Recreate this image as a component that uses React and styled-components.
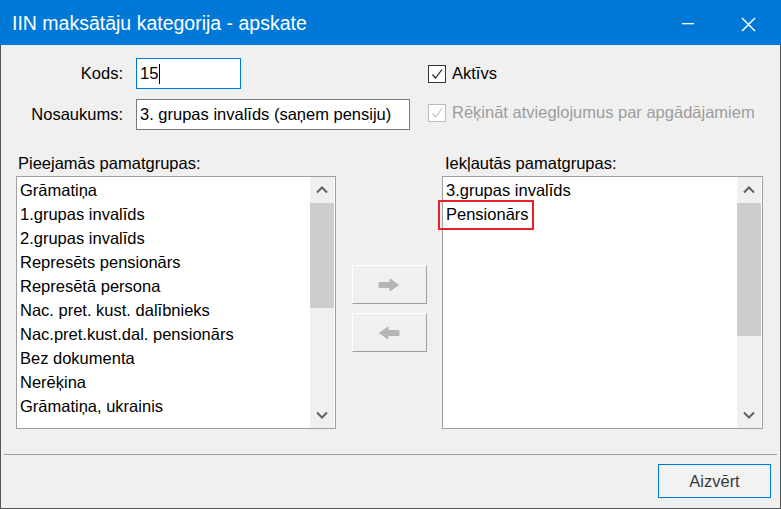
import React from 'react';
import styled, { createGlobalStyle } from 'styled-components';

const GlobalStyle = createGlobalStyle`
  html, body {
    margin: 0;
    padding: 0;
    background: #ffffff;
  }
  * {
    box-sizing: border-box;
  }
`;

const Window = styled.div`
  width: 781px;
  height: 509px;
  display: flex;
  flex-direction: column;
  font-family: "Liberation Sans", Arial, sans-serif;
  font-size: 16.5px;
  color: #000;
`;

const TitleBar = styled.div`
  height: 45px;
  flex: none;
  background: #0078d7;
  color: #fff;
  display: flex;
  align-items: center;
  padding: 0 2px 0 12px;
`;

const Title = styled.div`
  flex: 1;
  font-size: 19.5px;
  padding-top: 2px;
`;

const TitleButton = styled.div`
  width: 61px;
  height: 45px;
  padding-top: 3px;
  display: flex;
  align-items: center;
  justify-content: center;
`;

const Frame = styled.div`
  flex: 1;
  display: flex;
  flex-direction: column;
  background: #f0f0f0;
  border: 1px solid #555;
  border-top: none;
`;

const Content = styled.div`
  padding: 13px 0 0 15px;
`;

const TopForm = styled.div`
  display: flex;
`;

const FieldGrid = styled.div`
  display: grid;
  grid-template-columns: 107px 274px;
  grid-auto-rows: 31px;
  column-gap: 13px;
  row-gap: 10px;
`;

const Label = styled.label`
  display: flex;
  align-items: center;
  justify-content: flex-end;
`;

const Input = styled.div`
  width: ${p => p.$width}px;
  height: 31px;
  background: #fff;
  border: 1px solid ${p => (p.$focused ? '#0078d7' : '#7a7a7a')};
  display: flex;
  align-items: center;
  padding-left: 3px;
  white-space: nowrap;
`;

const Caret = styled.span`
  display: inline-block;
  width: 1px;
  height: 20px;
  background: #000;
  margin-left: 1px;
`;

const Checks = styled.div`
  margin-left: 18px;
  display: flex;
  flex-direction: column;
  gap: 8px;
`;

const CheckRow = styled.div`
  height: 31px;
  display: flex;
  align-items: center;
  gap: 6px;
  color: ${p => (p.$disabled ? '#9d9d9d' : '#000')};
`;

const Box = styled.span`
  width: 18px;
  height: 18px;
  background: #fff;
  border: 1px solid ${p => (p.$disabled ? '#bcbcbc' : '#333')};
  display: flex;
  align-items: center;
  justify-content: center;
`;

const ListsArea = styled.div`
  margin-top: 23px;
  display: grid;
  grid-template-columns: 320px 106px 321px;
  grid-template-rows: 20px 253px;
  row-gap: 3px;
`;

const ListLabel = styled.div`
  line-height: 20px;
  padding-left: ${p => p.$indent}px;
  grid-row: 1;
  grid-column: ${p => p.$col};
`;

const ListBox = styled.div`
  position: relative;
  grid-row: 2;
  grid-column: ${p => p.$col};
  background: #fff;
  border: 1px solid #a0a0a0;
  display: flex;
`;

const Items = styled.div`
  flex: 1;
  padding: 1px 0 0 3px;
  overflow: hidden;
`;

const Item = styled.div`
  height: 24px;
  line-height: 24px;
  white-space: nowrap;
`;

const Scrollbar = styled.div`
  width: 24px;
  margin-right: 1px;
  background: #f0f0f0;
  display: flex;
  flex-direction: column;
`;

const ScrollArrow = styled.div`
  height: 26px;
  flex: none;
  display: flex;
  align-items: center;
  justify-content: center;
`;

const Track = styled.div`
  flex: 1;
`;

const Thumb = styled.div`
  height: ${p => p.$size}px;
  background: #cdcdcd;
`;

const Highlight = styled.div`
  position: absolute;
  left: -5px;
  top: 23px;
  width: 96px;
  height: 30px;
  border: 2px solid #e8202a;
  pointer-events: none;
`;

const Mover = styled.div`
  grid-row: 2;
  grid-column: 2;
  padding-top: 89px;
  display: flex;
  flex-direction: column;
  align-items: center;
  gap: 9px;
`;

const MoveButton = styled.div`
  width: 75px;
  height: 39px;
  background: #f0f0f0;
  border: 1px solid #a0a0a0;
  border-top-color: #fff;
  border-left-color: #fff;
  display: flex;
  align-items: center;
  justify-content: center;
`;

const Separator = styled.div`
  margin: 25px 3px 0 3px;
  height: 1px;
  background: #a0a0a0;
`;

const Footer = styled.div`
  padding: 9px 9px 0 0;
  display: flex;
  justify-content: flex-end;
`;

const CloseButton = styled.div`
  width: 113px;
  height: 34px;
  background: #f2f2f2;
  border: 1px solid #0078d7;
  color: #3a3a3a;
  display: flex;
  align-items: center;
  justify-content: center;
`;

const Check = ({ color }) => (
  <svg width="14" height="14" viewBox="0 0 14 14">
    <path d="M2.5 7.5 L5.5 11 L12 2.5" fill="none" stroke={color} strokeWidth="1.2" />
  </svg>
);

const Chevron = ({ down }) => (
  <svg width="12" height="8" viewBox="0 0 12 8">
    <path
      d={down ? 'M1 1.5 L6 6.5 L11 1.5' : 'M1 6.5 L6 1.5 L11 6.5'}
      fill="none"
      stroke="#606060"
      strokeWidth="2"
    />
  </svg>
);

const Arrow = ({ left }) => (
  <svg width="22" height="14" viewBox="0 0 22 14" style={left ? { transform: 'scaleX(-1)' } : undefined}>
    <path
      d="M1 4.5 H12 V1 L20.5 7 L12 13 V9.5 H1 Z"
      fill="#b5b5b5"
      stroke="#b5b5b5"
      strokeWidth="1"
      strokeLinejoin="round"
    />
  </svg>
);

const available = [
  'Grāmatiņa',
  '1.grupas invalīds',
  '2.grupas invalīds',
  'Represēts pensionārs',
  'Represētā persona',
  'Nac. pret. kust. dalībnieks',
  'Nac.pret.kust.dal. pensionārs',
  'Bez dokumenta',
  'Nerēķina',
  'Grāmatiņa, ukrainis',
];

const included = ['3.grupas invalīds', 'Pensionārs'];

function List({ col, items, thumb, children }) {
  return (
    <ListBox $col={col}>
      <Items>
        {items.map(i => (
          <Item key={i}>{i}</Item>
        ))}
      </Items>
      <Scrollbar>
        <ScrollArrow>
          <Chevron />
        </ScrollArrow>
        <Track>
          <Thumb $size={thumb} />
        </Track>
        <ScrollArrow>
          <Chevron down />
        </ScrollArrow>
      </Scrollbar>
      {children}
    </ListBox>
  );
}

export default function App() {
  return (
    <>
      <GlobalStyle />
      <Window>
        <TitleBar>
          <Title>IIN maksātāju kategorija - apskate</Title>
          <TitleButton>
            <svg width="12" height="2" viewBox="0 0 12 2">
              <rect x="0" y="0" width="12" height="1.3" fill="#fff" />
            </svg>
          </TitleButton>
          <TitleButton>
            <svg width="15" height="15" viewBox="0 0 15 15">
              <path d="M1 1 L14 14 M14 1 L1 14" stroke="#fff" strokeWidth="1.5" />
            </svg>
          </TitleButton>
        </TitleBar>
        <Frame>
          <Content>
            <TopForm>
              <FieldGrid>
                <Label>Kods:</Label>
                <Input $width={105} $focused>
                  15<Caret />
                </Input>
                <Label>Nosaukums:</Label>
                <Input $width={274}>3. grupas invalīds (saņem pensiju)</Input>
              </FieldGrid>
              <Checks>
                <CheckRow>
                  <Box>
                    <Check color="#222" />
                  </Box>
                  Aktīvs
                </CheckRow>
                <CheckRow $disabled>
                  <Box $disabled>
                    <Check color="#c4c4c4" />
                  </Box>
                  Rēķināt atvieglojumus par apgādājamiem
                </CheckRow>
              </Checks>
            </TopForm>
            <ListsArea>
              <ListLabel $col={1} $indent={2}>Pieejamās pamatgrupas:</ListLabel>
              <ListLabel $col={3} $indent={3}>Iekļautās pamatgrupas:</ListLabel>
              <List col={1} items={available} thumb={105} />
              <Mover>
                <MoveButton>
                  <Arrow />
                </MoveButton>
                <MoveButton>
                  <Arrow left />
                </MoveButton>
              </Mover>
              <List col={3} items={included} thumb={133}>
                <Highlight />
              </List>
            </ListsArea>
          </Content>
          <Separator />
          <Footer>
            <CloseButton>Aizvērt</CloseButton>
          </Footer>
        </Frame>
      </Window>
    </>
  );
}
